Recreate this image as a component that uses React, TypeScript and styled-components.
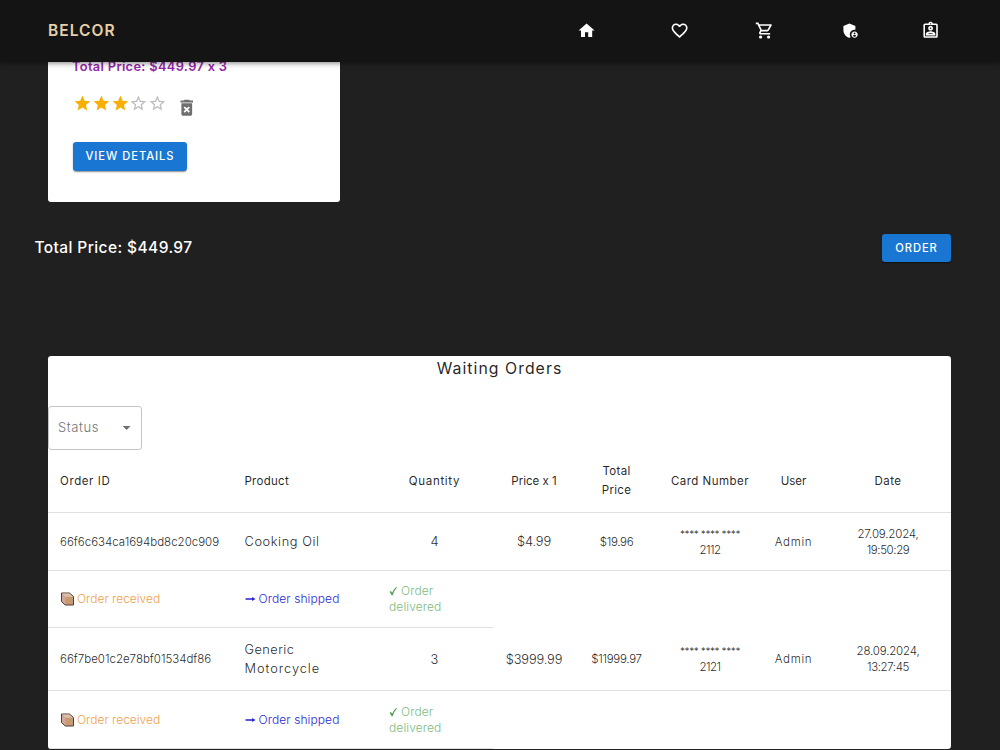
import { ReactNode } from "react";
import styled, { createGlobalStyle } from "styled-components";
import {
  MdAdminPanelSettings,
  MdArrowDropDown,
  MdDeleteForever,
  MdFavoriteBorder,
  MdHome,
  MdOutlineAssignmentInd,
  MdOutlineShoppingCart,
  MdStar,
  MdStarBorder,
} from "react-icons/md";

const GlobalStyle = createGlobalStyle`
  *, *::before, *::after { box-sizing: border-box; }
  html, body { height: 100%; }
  body {
    margin: 0;
    overflow: hidden;
    background: #202020;
    font-family: Inter, "Liberation Sans", sans-serif;
    font-variant-ligatures: no-contextual;
  }
  h1, h2, p { margin: 0; }
`;

const Page = styled.div`
  display: flex;
  flex-direction: column;
  height: 750px;
  overflow: hidden;
`;

const Header = styled.header`
  position: relative;
  z-index: 2;
  flex: none;
  display: flex;
  align-items: center;
  justify-content: space-between;
  height: 62px;
  padding: 0 59.5px 1px 48px;
  background: #141414;
  box-shadow: 0 2px 3px -1px rgba(0, 0, 0, 0.2), 0 3px 4px rgba(0, 0, 0, 0.14),
    0 1px 8px rgba(0, 0, 0, 0.12);
`;

const Brand = styled.h1`
  color: #e6d0a8;
  font-size: 15.5px;
  font-weight: 600;
  letter-spacing: 1.05px;
`;

const Nav = styled.nav`
  display: flex;
  align-items: center;
  color: #fff;
  font-size: 19.2px;

  svg { display: block; }
  svg + svg { margin-left: 66.5px; }
  svg:nth-child(2) { margin-left: 73.3px; }
  svg:last-child { margin-left: 61px; }
`;

const ProductCard = styled.section`
  flex: none;
  display: flex;
  flex-direction: column;
  align-items: flex-start;
  width: 292px;
  height: 140px;
  margin-left: 48px;
  padding-left: 25px;
  border-radius: 0 0 3px 3px;
  background: #fff;
`;

const ProductTotal = styled.p`
  margin: -5px 0 0 -1px;
  color: #9328a8;
  font-size: 12.8px;
  font-weight: 600;
  line-height: 20px;
  letter-spacing: 0.34px;
`;

const RatingRow = styled.div`
  display: flex;
  align-items: center;
  height: 20px;
  margin-top: 17px;
`;

const Stars = styled.div`
  display: flex;
  margin-top: -1px;
  color: #faaf00;
  font-size: 18.8px;
`;

const EmptyStar = styled(MdStarBorder)`
  color: #bdbdbd;
`;

const Trash = styled(MdDeleteForever)`
  margin: 8px 0 0 9.5px;
  color: #6f6f6f;
  font-size: 21.5px;
`;

const Button = styled.button<{ $height: number; $width: number; $track: number }>`
  width: ${(p) => p.$width}px;
  height: ${(p) => p.$height}px;
  padding: 0 0 1px;
  border: 0;
  border-radius: 3.2px;
  background: #1976d2;
  box-shadow: 0 2px 1px -1px rgba(0, 0, 0, 0.2), 0 1px 2px rgba(0, 0, 0, 0.3);
  color: #fff;
  font: 500 11.2px Inter, "Liberation Sans", sans-serif;
  letter-spacing: ${(p) => p.$track}px;
`;

const DetailsButton = styled(Button)`
  margin-top: 28px;
`;

const Checkout = styled.section`
  flex: none;
  display: flex;
  align-items: center;
  justify-content: space-between;
  height: 28px;
  margin: 32px 49px 94px 34.5px;
`;

const CheckoutTotal = styled.p`
  padding-bottom: 1px;
  color: #fff;
  font-size: 15.5px;
  font-weight: 500;
  letter-spacing: 0.4px;
`;

const OrdersPanel = styled.section`
  flex: none;
  width: 903px;
  height: 393px;
  margin-left: 48px;
  overflow: hidden;
  border-radius: 3.2px;
  background: #fff;
  color: rgba(0, 0, 0, 0.87);
`;

const OrdersTitle = styled.h2`
  height: 50px;
  text-align: center;
  font-size: 15.8px;
  font-weight: 400;
  line-height: 26px;
  letter-spacing: 1.05px;
`;

const StatusSelect = styled.div`
  display: flex;
  align-items: center;
  justify-content: space-between;
  width: 94px;
  height: 44px;
  padding: 0 5px 0 9px;
  border: 1px solid #c4c4c4;
  border-radius: 3.2px;
  color: #747474;
  font-size: 13px;
  font-weight: 300;
  letter-spacing: 0.6px;

  svg { color: #707070; font-size: 19.2px; }
`;

const StatusLabel = styled.span`
  padding-bottom: 2px;
`;

const Table = styled.table`
  width: 903px;
  border-collapse: separate;
  border-spacing: 0;
  table-layout: fixed;
`;

const Row = styled.tr<{ $height: number }>`
  height: ${(p) => p.$height}px;
`;

const Cell = styled.td<{ $align?: "left" | "center" }>`
  padding: 0 0 0 ${(p) => (p.$align === "left" ? 12 : 0)}px;
  border-bottom: 1px solid #e0e0e0;
  text-align: ${(p) => p.$align ?? "center"};
  vertical-align: middle;
`;

const HeadText = styled.span<{ $track: number }>`
  display: block;
  font-size: 11.5px;
  font-weight: 400;
  line-height: 19px;
  letter-spacing: ${(p) => p.$track}px;
`;

const BodyText = styled.span<{ $track?: number }>`
  display: block;
  font-size: 12.8px;
  font-weight: 300;
  line-height: 19px;
  letter-spacing: ${(p) => p.$track ?? 0}px;
`;

const SmallText = styled.span<{ $track?: number }>`
  display: block;
  font-size: 11.5px;
  font-weight: 300;
  line-height: 16px;
  letter-spacing: ${(p) => p.$track ?? 0}px;
`;

const CardMask = styled(SmallText)`
  font-size: 10px;
  letter-spacing: -0.4px;
`;

const Step = styled.div<{ $color: string; $track?: number }>`
  display: flex;
  align-items: center;
  gap: 3px;
  color: ${(p) => p.$color};
  font-size: 12px;
  font-weight: 300;
  line-height: 16px;
  letter-spacing: ${(p) => p.$track ?? 0}px;

  svg { flex: none; }
`;

const DeliveredStep = styled.div`
  padding-left: 1px;
`;

const widths = [184.5, 143.5, 117, 82, 83, 104, 63, 126];

const headings: { label: ReactNode; track: number }[] = [
  { label: "Order ID", track: 0.6 },
  { label: "Product", track: 0.28 },
  { label: "Quantity", track: 0.7 },
  { label: "Price x 1", track: 0 },
  { label: <>Total<br />Price</>, track: 0.3 },
  { label: "Card Number", track: 0.48 },
  { label: "User", track: -0.1 },
  { label: "Date", track: 0.5 },
];

interface Order {
  id: string;
  product: string[];
  quantity: number;
  price: string;
  total: string;
  card: string;
  date: string;
  time: string;
  height: number;
  stepHeight: number;
}

const orders: Order[] = [
  {
    id: "66f6c634ca1694bd8c20c909",
    product: ["Cooking Oil"],
    quantity: 4,
    price: "$4.99",
    total: "$19.96",
    card: "2112",
    date: "27.09.2024,",
    time: "19:50:29",
    height: 58,
    stepHeight: 57,
  },
  {
    id: "66f7be01c2e78bf01534df86",
    product: ["Generic", "Motorcycle"],
    quantity: 3,
    price: "$3999.99",
    total: "$11999.97",
    card: "2121",
    date: "28.09.2024,",
    time: "13:27:45",
    height: 63,
    stepHeight: 58,
  },
];

const productTrack: Record<string, number> = {
  "Cooking Oil": 0.58,
  Generic: 0.45,
  Motorcycle: 0.95,
};

const PackageIcon = () => (
  <svg width="14" height="14" viewBox="0 0 14 14">
    <path d="M1.5 1h8l4 3.600V13H5.200L1.500 9.600Z" fill="#c79a72" stroke="#4a403c" strokeWidth="1" strokeLinejoin="round" />
    <path d="M2 1.500h7.300l3.600 3.300H5.400Z" fill="#dcc0ae" />
    <path d="M2 1.700 5.400 4.900v7.300L2 9.300Z" fill="#d3a79a" />
  </svg>
);

const ArrowIcon = () => (
  <svg width="11" height="8" viewBox="0 0 11 8">
    <path d="M.5 3.300h6.700V2L10.500 4 7.200 6V4.700H.500Z" fill="#2a1fd0" />
  </svg>
);

const CheckIcon = () => (
  <svg width="9" height="10" viewBox="0 0 9 10">
    <path d="M.6 5.800 2 5l1.100 1.800Q4.800 2.600 7.600.8L8 1.200Q5.200 4.300 3.600 9.200H2.700Z" fill="#4f9e54" />
  </svg>
);

const OrderRows = ({ order }: { order: Order }) => (
  <>
    <Row $height={order.height}>
      <Cell $align="left"><SmallText>{order.id}</SmallText></Cell>
      <Cell $align="left">
        {order.product.map((line) => (
          <BodyText key={line} $track={productTrack[line]}>{line}</BodyText>
        ))}
      </Cell>
      <Cell><BodyText>{order.quantity}</BodyText></Cell>
      <Cell><BodyText $track={-0.12}>{order.price}</BodyText></Cell>
      <Cell><SmallText $track={-0.3}>{order.total}</SmallText></Cell>
      <Cell>
        <CardMask>**** **** ****</CardMask>
        <SmallText $track={-0.6}>{order.card}</SmallText>
      </Cell>
      <Cell><SmallText $track={0.68}>Admin</SmallText></Cell>
      <Cell>
        <SmallText $track={-0.18}>{order.date}</SmallText>
        <SmallText $track={-0.4}>{order.time}</SmallText>
      </Cell>
    </Row>
    <Row $height={order.stepHeight}>
      <Cell $align="left">
        <Step $color="#f0a04b" $track={0}><PackageIcon />Order received</Step>
      </Cell>
      <Cell $align="left">
        <Step $color="#2a1fd0" $track={0.09}><ArrowIcon />Order shipped</Step>
      </Cell>
      <Cell $align="left">
        <DeliveredStep>
          <Step $color="#7dbb80" $track={0.1}><CheckIcon />Order</Step>
          <Step $color="#7dbb80" $track={0.1}>delivered</Step>
        </DeliveredStep>
      </Cell>
    </Row>
  </>
);

export default function App() {
  return (
    <>
      <GlobalStyle />
      <Page>
        <Header>
          <Brand>BELCOR</Brand>
          <Nav>
            <MdHome />
            <MdFavoriteBorder />
            <MdOutlineShoppingCart />
            <MdAdminPanelSettings />
            <MdOutlineAssignmentInd />
          </Nav>
        </Header>
        <ProductCard>
          <ProductTotal>Total Price: $449.97 x 3</ProductTotal>
          <RatingRow>
            <Stars>
              <MdStar />
              <MdStar />
              <MdStar />
              <EmptyStar />
              <EmptyStar />
            </Stars>
            <Trash />
          </RatingRow>
          <DetailsButton $width={114} $height={29} $track={0.95}>VIEW DETAILS</DetailsButton>
        </ProductCard>
        <Checkout>
          <CheckoutTotal>Total Price: $449.97</CheckoutTotal>
          <Button $width={69} $height={28} $track={0.9}>ORDER</Button>
        </Checkout>
        <OrdersPanel>
          <OrdersTitle>Waiting Orders</OrdersTitle>
          <StatusSelect>
            <StatusLabel>Status</StatusLabel>
            <MdArrowDropDown />
          </StatusSelect>
          <Table>
            <colgroup>
              {widths.map((width, i) => <col key={i} width={width} />)}
            </colgroup>
            <thead>
              <Row $height={63}>
                {headings.map((h, i) => (
                  <Cell as="th" key={i} $align={i < 2 ? "left" : "center"}>
                    <HeadText $track={h.track}>{h.label}</HeadText>
                  </Cell>
                ))}
              </Row>
            </thead>
            <tbody>
              {orders.map((order) => <OrderRows key={order.id} order={order} />)}
            </tbody>
          </Table>
        </OrdersPanel>
      </Page>
    </>
  );
}
